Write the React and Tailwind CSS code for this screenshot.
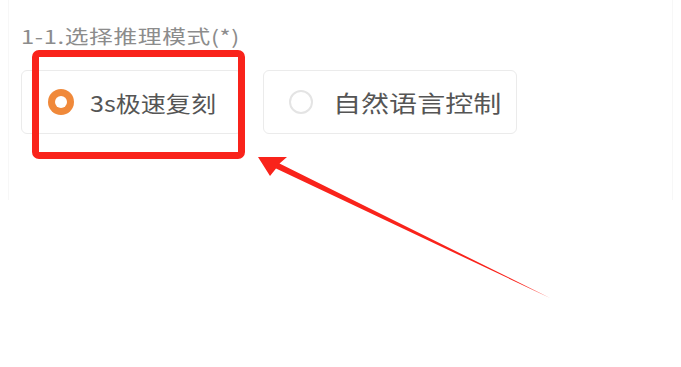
import React from "react";

const Radio = ({ checked }) =>
  checked ? (
    <span className="flex h-[26px] w-[26px] shrink-0 items-center justify-center rounded-full bg-[#f0893a]">
      <span className="h-[12px] w-[12px] rounded-full bg-white" />
    </span>
  ) : (
    <span className="h-[24px] w-[24px] shrink-0 rounded-full border-2 border-[#e4e4e4] bg-white" />
  );

const App = () => {
  return (
    <div
      className="relative h-[367px] w-[681px] overflow-hidden bg-white"
      style={{ fontFamily: '"Noto Sans CJK SC", "Noto Sans", sans-serif' }}
    >
      {/* panel */}
      <div className="mx-[8px] h-[200px] border-x border-[#f7f7f7] px-[12px] pt-[24px]">
        <p className="origin-left scale-x-[1.25] whitespace-nowrap text-[19px] leading-[24px] tracking-[0.5px] text-[#8c8c8c]">
          1-1.选择推理模式(*)
        </p>

        <div className="mt-[22px] flex gap-[21px]">
          <div className="flex h-[64px] w-[221px] items-center gap-[16px] rounded-md border border-[#ebebeb] bg-white pl-[26px]">
            <Radio checked />
            <span className="origin-left scale-x-[1.14] whitespace-nowrap text-[22px] leading-none text-[#555]">
              3s极速复刻
            </span>
          </div>
          <div className="flex h-[64px] w-[254px] items-center gap-[20px] rounded-md border border-[#ebebeb] bg-white pl-[25px]">
            <Radio />
            <span className="origin-left scale-x-[1.22] whitespace-nowrap text-[23px] leading-none text-[#555]">
              自然语言控制
            </span>
          </div>
        </div>
      </div>

      {/* annotation box */}
      <div className="absolute left-[32px] top-[50px] h-[109px] w-[213px] rounded-[7px] border-[7px] border-[#f9231b]" />

      {/* annotation arrow */}
      <svg className="absolute left-0 top-0" width="681" height="367" viewBox="0 0 681 367">
        <polygon
          points="258,157 287,157 279.5,163.5 550,298 276,168.5 270,176"
          fill="#f9231b"
        />
      </svg>
    </div>
  );
};

export default App;
